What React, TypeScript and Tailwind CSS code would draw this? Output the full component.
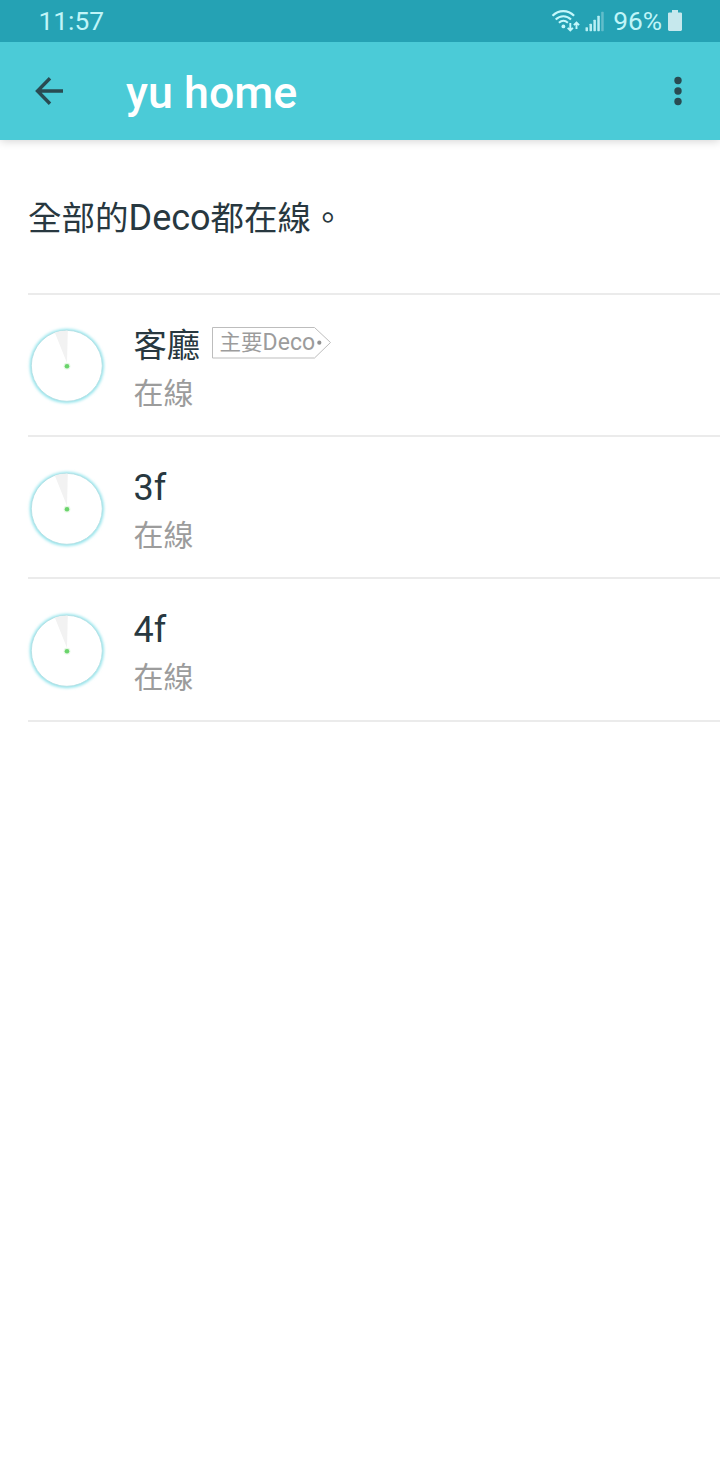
interface Deco {
  name: string;
  status: string;
  primary?: boolean;
}

const decos: Deco[] = [
  { name: "客廳", status: "在線", primary: true },
  { name: "3f", status: "在線" },
  { name: "4f", status: "在線" },
];

function WifiIcon() {
  return (
    <svg width="31" height="24" viewBox="0 0 31 24" fill="none" stroke="#c4f8fb">
      <path d="M2.500 6.800C8.800.6 17.800.6 24.100 6.800" strokeWidth="2.200" />
      <path d="M5.700 10.500C10.200 6.200 16.500 6.200 21 10.500" strokeWidth="2.100" />
      <path d="M8.900 13.800c2.800-2.500 6.200-2.500 9 0" strokeWidth="2" />
      <circle cx="13.400" cy="17.400" r="1.900" fill="#c4f8fb" stroke="none" />
      <path d="M20.300 14v7M17.700 18.800l2.600 2.600 2.600-2.600" strokeWidth="1.900" />
      <path d="M26.500 20v-6.500M23.900 16.100l2.600-2.600 2.600 2.600" strokeWidth="1.900" />
    </svg>
  );
}

function SignalIcon() {
  return (
    <svg width="20" height="24" viewBox="0 0 20 24" fill="#b8eff4">
      <rect x="0.5" y="18.200" width="2.500" height="4" rx="0.6" />
      <rect x="4.500" y="14.700" width="2.500" height="7.500" rx="0.6" />
      <rect x="8.400" y="10.700" width="2.500" height="11.500" rx="0.6" />
      <rect x="12.300" y="6.700" width="2.500" height="15.500" rx="0.6" />
      <rect x="16.200" y="2.800" width="2.500" height="19.400" rx="0.6" fill="#62bdca" />
    </svg>
  );
}

function BatteryIcon() {
  return (
    <svg width="14" height="21" viewBox="0 0 14 21" fill="#c6e8ed">
      <path d="M4 0h6v2.500h3.200l.8.800V20l-1 1H1l-1-1V3.300l.8-.8H4z" />
    </svg>
  );
}

function Radar() {
  return (
    <svg width="90" height="90" viewBox="0 0 90 90" className="shrink-0">
      <defs>
        <filter id="glow" x="-20%" y="-20%" width="140%" height="140%">
          <feGaussianBlur stdDeviation="1.8" />
        </filter>
      </defs>
      <circle cx="44.800" cy="45" r="37" fill="#8ae2ea" filter="url(#glow)" />
      <circle cx="44.800" cy="44.800" r="35.500" fill="#fff" stroke="#b5dfe3" strokeWidth="0.9" />
      <path d="M45 42L32.800 11.500A35 35 0 0 1 45.800 9.800z" fill="#f2f2f2" />
      <circle cx="45" cy="45.200" r="3.400" fill="#e6f8e5" />
      <circle cx="45" cy="45.200" r="2.300" fill="#6ad46b" />
    </svg>
  );
}

function PrimaryTag() {
  return (
    <span className="relative -mt-[5px] flex h-8 w-[120px] items-center pl-2">
      <svg width="120" height="32" viewBox="0 0 120 32" fill="none" className="absolute inset-0">
        <path d="M.5 .5H102.500L118.500 15.500L102.500 31H.5z" stroke="#bdbdbd" />
        <circle cx="107.300" cy="15.700" r="2.100" fill="#929292" />
      </svg>
      <span className="flex items-baseline text-[21.500px] leading-8 text-[#9c9c9c]">
        主要<span className="text-[23px]">Deco</span>
      </span>
    </span>
  );
}

function DecoRow({ deco }: { deco: Deco }) {
  return (
    <li className="flex h-[142.400px] items-center border-b-2 border-[#ebebeb]">
      <div className="mt-[3px] -ml-1.5 flex w-[111.500px]">
        <Radar />
      </div>
      <div className="mt-[10px] flex flex-col gap-1">
        <div className="flex h-11 items-center gap-[11.500px]">
          <h2 className={deco.primary ? "text-[33.300px] leading-11 text-[#283840]" : "text-[36px] leading-11 text-[#283840]"}>
            {deco.name}
          </h2>
          {deco.primary && <PrimaryTag />}
        </div>
        <p className="h-11 text-[30px] leading-11 text-[#9c9c9c]">{deco.status}</p>
      </div>
    </li>
  );
}

export default function App() {
  return (
    <div className="flex min-h-[1480px] w-full flex-col bg-white font-['Roboto','Noto_Sans_CJK_TC',sans-serif]">
      <div className="z-10 flex h-[42px] items-center bg-[#25a2b4] pr-[38px] pl-[38.500px] text-[26.300px] text-[#c0f5f8]">
        <time className="mr-auto pt-0.5">11:57</time>
        <WifiIcon />
        <span className="ml-1 flex">
          <SignalIcon />
        </span>
        <span className="ml-2 pt-0.5">96%</span>
        <span className="-mt-0.5 ml-1.5 flex">
          <BatteryIcon />
        </span>
      </div>
      <header className="flex h-[98px] items-center bg-[#4bcbd7] pr-[37px] pl-[35px] shadow-[0_1px_9px_rgba(0,0,0,0.18)]">
        <button aria-label="返回">
          <svg width="29" height="28" viewBox="0 0 29 28" fill="none" stroke="#294b52" strokeWidth="3.400">
            <path d="M15 1.200L2.500 14L15 26.800M2.500 14H28" />
          </svg>
        </button>
        <h1 className="mr-auto ml-[62px] pt-1 text-[44.800px] leading-none font-medium text-white">yu home</h1>
        <button aria-label="更多">
          <svg width="10" height="30" viewBox="0 0 10 30" fill="#294b52">
            <circle cx="5" cy="4.500" r="3.700" />
            <circle cx="5" cy="15" r="3.700" />
            <circle cx="5" cy="25.500" r="3.700" />
          </svg>
        </button>
      </header>
      <main className="pl-7">
        <p className="flex h-[154.500px] items-baseline border-b-2 border-[#ebebeb] pt-[53px] text-[33.500px] leading-[50px] text-[#283840]">
          全部的<span className="text-[36px]">Deco</span>都在線。
        </p>
        <ul>
          {decos.map((deco) => (
            <DecoRow key={deco.name} deco={deco} />
          ))}
        </ul>
      </main>
    </div>
  );
}
